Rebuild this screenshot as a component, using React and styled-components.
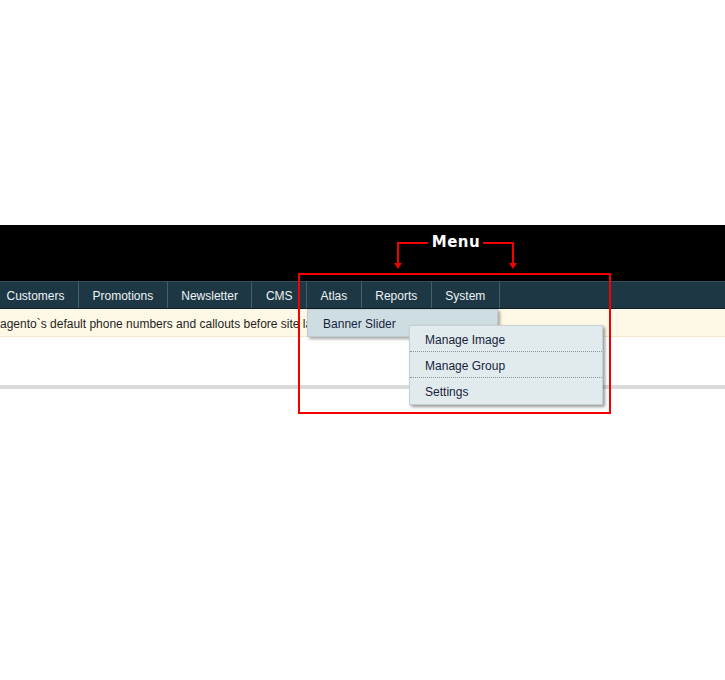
import React from 'react';
import styled, { createGlobalStyle } from 'styled-components';

const GlobalStyle = createGlobalStyle`
  html, body {
    margin: 0;
    padding: 0;
    background: #fff;
    overflow: hidden;
  }
  body {
    font-family: "Liberation Sans", Arial, sans-serif;
    font-size: 12px;
  }
`;

const Page = styled.div`
  position: relative;
  width: 725px;
  height: 680px;
  overflow: hidden;
  padding-top: 225px;
  box-sizing: border-box;
`;

const Header = styled.div`
  height: 56px;
  background: #000;
`;

const NavBar = styled.nav`
  height: 26px;
  background: #1d3844;
  border-top: 1px solid #35505c;
  border-bottom: 1px solid #0e1e26;
`;

const NavList = styled.ul`
  display: flex;
  margin: 0 0 0 -7px;
  padding: 0;
  list-style: none;
  height: 100%;
`;

const NavItem = styled.li`
  position: relative;
  display: flex;
  align-items: center;
  padding: 1px 13.5px 0;
  border-right: 1px solid #41606c;
  color: #eef3f5;
  font-size: 12px;
  white-space: nowrap;
`;

const Dropdown = styled.div`
  position: absolute;
  left: 0;
  top: 27px;
  width: 191px;
  height: 28px;
  box-sizing: border-box;
  background: #cedde2;
  border: 1px solid #bfcdd2;
  box-shadow: 2px 2px 3px rgba(0, 0, 0, 0.35);
  z-index: 2;
`;

const DropdownLabel = styled.div`
  padding: 1px 0 0 15px;
  line-height: 26px;
  color: #17233a;
  font-size: 12px;
`;

const SubMenu = styled.ul`
  position: absolute;
  left: 101px;
  top: 15px;
  width: 192px;
  margin: 0;
  padding: 0;
  list-style: none;
  background: #e1ebed;
  border: 1px solid #c5d1d4;
  box-shadow: 2px 2px 3px rgba(0, 0, 0, 0.4);
  z-index: 3;
`;

const SubItem = styled.li`
  height: 26px;
  line-height: 28px;
  padding-left: 15px;
  color: #17233a;
  font-size: 12px;
  border-bottom: ${p => (p.$last ? 'none' : '1px dotted #8d9598')};
  box-sizing: border-box;
`;

const Notice = styled.div`
  height: 28px;
  padding-top: 2px;
  box-sizing: border-box;
  background: #fef8e6;
  border-bottom: 1px solid #f1e8cd;
  display: flex;
  align-items: center;
  overflow: hidden;
  white-space: nowrap;
`;

const NoticeText = styled.span`
  margin-left: -10px;
  color: #1f1f1f;
  font-size: 12px;
`;

const Content = styled.div`
  height: 48px;
  border-bottom: 4px solid #dadada;
`;

const Frame = styled.div`
  position: absolute;
  left: 298px;
  top: 273px;
  width: 313px;
  height: 141px;
  box-sizing: border-box;
  border: 2px solid #f30000;
  pointer-events: none;
  z-index: 4;
`;

const Callout = styled.div`
  position: absolute;
  left: 390px;
  top: 232px;
  width: 132px;
  height: 40px;
  z-index: 4;
`;

const CalloutLabel = styled.span`
  position: absolute;
  left: 0;
  right: 0;
  top: 0;
  text-align: center;
  color: #fff;
  font-family: "DejaVu Sans", sans-serif;
  font-weight: bold;
  font-size: 15px;
  letter-spacing: 0.5px;
  line-height: 20px;
`;

const menu = ['Customers', 'Promotions', 'Newsletter', 'CMS', 'Atlas', 'Reports', 'System'];
const subItems = ['Manage Image', 'Manage Group', 'Settings'];

const App = () => (
  <>
    <GlobalStyle />
    <Page>
      <Header />
      <NavBar>
        <NavList>
          {menu.map(label => (
            <NavItem key={label}>
              {label}
              {label === 'Atlas' && (
                <Dropdown>
                  <DropdownLabel>Banner Slider</DropdownLabel>
                  <SubMenu>
                    {subItems.map((s, i) => (
                      <SubItem key={s} $last={i === subItems.length - 1}>
                        {s}
                      </SubItem>
                    ))}
                  </SubMenu>
                </Dropdown>
              )}
            </NavItem>
          ))}
        </NavList>
      </NavBar>
      <Notice>
        <NoticeText>Magento`s default phone numbers and callouts before site launch</NoticeText>
      </Notice>
      <Content />

      <Callout>
        <svg width="132" height="40" viewBox="0 0 132 40">
          <path d="M8 34 V11 H38" fill="none" stroke="#f30000" strokeWidth="2" />
          <path d="M93 11 H123 V34" fill="none" stroke="#f30000" strokeWidth="2" />
          <polygon points="4,31 12,31 8,37" fill="#f30000" />
          <polygon points="119,31 127,31 123,37" fill="#f30000" />
        </svg>
        <CalloutLabel>Menu</CalloutLabel>
      </Callout>
      <Frame />
    </Page>
  </>
);

export default App;
